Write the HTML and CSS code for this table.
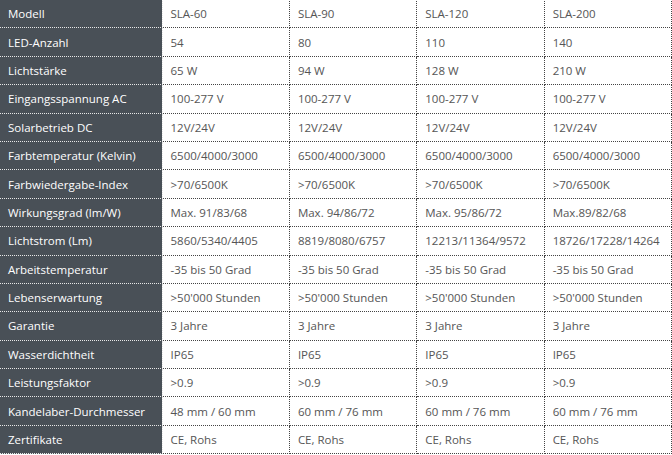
FILE: index.html
```html
<!DOCTYPE html>
<html lang="de">
<head>
<meta charset="utf-8">
<title>Technische Daten</title>
<link rel="stylesheet" href="styles.css">
</head>
<body>
<table class="specs">
<colgroup><col class="c-label"><col><col><col><col></colgroup>
<tbody>
<tr><th>Modell</th><td>SLA-60</td><td>SLA-90</td><td>SLA-120</td><td>SLA-200</td></tr>
<tr><th>LED-Anzahl</th><td>54</td><td>80</td><td>110</td><td>140</td></tr>
<tr><th>Lichtstärke</th><td>65 W</td><td>94 W</td><td>128 W</td><td>210 W</td></tr>
<tr><th>Eingangsspannung AC</th><td>100-277 V</td><td>100-277 V</td><td>100-277 V</td><td>100-277 V</td></tr>
<tr><th>Solarbetrieb DC</th><td>12V/24V</td><td>12V/24V</td><td>12V/24V</td><td>12V/24V</td></tr>
<tr><th>Farbtemperatur (Kelvin)</th><td>6500/4000/3000</td><td>6500/4000/3000</td><td>6500/4000/3000</td><td>6500/4000/3000</td></tr>
<tr><th>Farbwiedergabe-Index</th><td>&gt;70/6500K</td><td>&gt;70/6500K</td><td>&gt;70/6500K</td><td>&gt;70/6500K</td></tr>
<tr><th>Wirkungsgrad (lm/W)</th><td>Max. 91/83/68</td><td>Max. 94/86/72</td><td>Max. 95/86/72</td><td>Max.89/82/68</td></tr>
<tr><th>Lichtstrom (Lm)</th><td>5860/5340/4405</td><td>8819/8080/6757</td><td>12213/11364/9572</td><td>18726/17228/14264</td></tr>
<tr><th>Arbeitstemperatur</th><td>-35 bis 50 Grad</td><td>-35 bis 50 Grad</td><td>-35 bis 50 Grad</td><td>-35 bis 50 Grad</td></tr>
<tr><th>Lebenserwartung</th><td>&gt;50'000 Stunden</td><td>&gt;50'000 Stunden</td><td>&gt;50'000 Stunden</td><td>&gt;50'000 Stunden</td></tr>
<tr><th>Garantie</th><td>3 Jahre</td><td>3 Jahre</td><td>3 Jahre</td><td>3 Jahre</td></tr>
<tr><th>Wasserdichtheit</th><td>IP65</td><td>IP65</td><td>IP65</td><td>IP65</td></tr>
<tr><th>Leistungsfaktor</th><td>&gt;0.9</td><td>&gt;0.9</td><td>&gt;0.9</td><td>&gt;0.9</td></tr>
<tr><th>Kandelaber-Durchmesser</th><td>48 mm / 60 mm</td><td>60 mm / 76 mm</td><td>60 mm / 76 mm</td><td>60 mm / 76 mm</td></tr>
<tr><th>Zertifikate</th><td>CE, Rohs</td><td>CE, Rohs</td><td>CE, Rohs</td><td>CE, Rohs</td></tr>
</tbody>
</table>
</body>
</html>
```
FILE: styles.css
```css
html, body {
  margin: 0;
  padding: 0;
  background: #ffffff;
}

.specs {
  width: 672px;
  margin-top: -1px;
  border-collapse: collapse;
  table-layout: fixed;
  font-family: "Open Sans", "DejaVu Sans", sans-serif;
  font-size: 11.5px;
}

.c-label {
  width: 162px;
}

.specs th,
.specs td {
  height: 28.4px;
  padding: 0 8px;
  text-align: left;
  font-weight: normal;
  white-space: nowrap;
  vertical-align: middle;
  box-sizing: border-box;
}

.specs th {
  background: #495057;
  color: #ffffff;
  border: 1px dotted #e8e8e8;
  border-left: none;
}

.specs td {
  color: #555555;
  border: 1px dotted #444444;
}
```
